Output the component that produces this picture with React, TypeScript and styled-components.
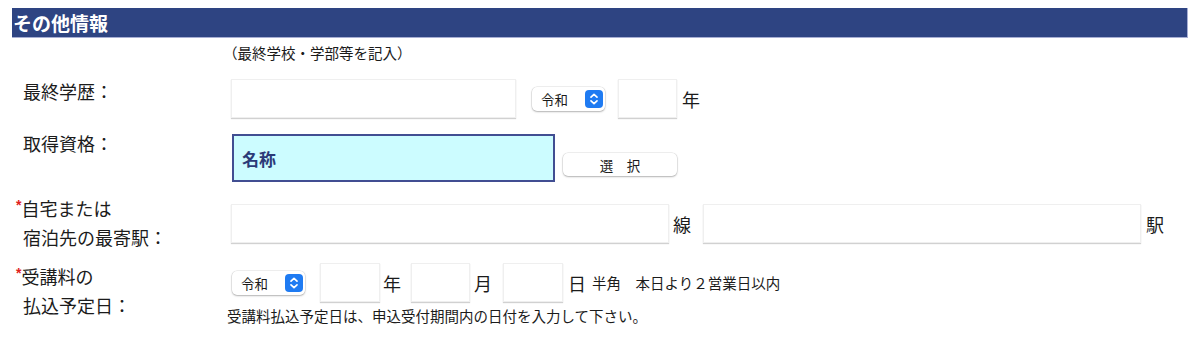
import styled, { createGlobalStyle } from 'styled-components';

const GlobalStyle = createGlobalStyle`
  body {
    margin: 8px;
    background: #ffffff;
    color: #1b1b1b;
    font-family: 'Noto Sans CJK JP', 'Noto Sans', sans-serif;
  }
`;

const Page = styled.div`
  padding: 0 4px;
`;

const SectionHeader = styled.h2`
  margin: 0;
  height: 29px;
  line-height: 29px;
  padding-left: 1px;
  background: #2e4482;
  color: #ffffff;
  font-size: 19px;
  font-weight: 700;
  border-bottom: 1px solid #a7aed3;
  border-right: 1px solid #a7aed3;
`;

const Hint = styled.div`
  margin-top: 5px;
  padding-left: 211px;
  font-size: 14.5px;
  line-height: 20px;
`;

const Row = styled.div<{ $mt: number }>`
  display: flex;
  align-items: flex-start;
  margin-top: ${({ $mt }) => $mt}px;
`;

const Label = styled.div<{ $offset: number }>`
  flex: none;
  width: 208px;
  padding-left: 11px;
  margin-top: ${({ $offset }) => $offset}px;
  font-size: 18px;
  line-height: 29px;
`;

const Required = styled.span`
  margin-left: -7px;
  color: #e0201c;
  font-family: 'Liberation Sans', sans-serif;
  font-size: 14px;
  font-weight: 700;
  vertical-align: top;
  line-height: 22px;
`;

const Field = styled.div`
  display: flex;
  flex-direction: column;
`;

const Controls = styled.div`
  display: flex;
  align-items: center;
`;

const TextInput = styled.input<{ $w: number; $ml?: number }>`
  box-sizing: border-box;
  width: ${({ $w }) => $w}px;
  height: 39px;
  margin: 0 0 0 ${({ $ml }) => $ml ?? 0}px;
  border: 1px solid #efefef;
  box-shadow: 0 1px 1px rgba(0, 0, 0, 0.18);
  background: #ffffff;
  outline: none;
`;

const Unit = styled.span<{ $ml: number }>`
  margin-left: ${({ $ml }) => $ml}px;
  font-size: 18px;
  line-height: 24px;
`;

const SelectBox = styled.div<{ $ml?: number }>`
  box-sizing: border-box;
  display: flex;
  align-items: center;
  justify-content: space-between;
  width: 73px;
  height: 24px;
  margin-left: ${({ $ml }) => $ml ?? 0}px;
  padding: 0 2px 0 9px;
  border-radius: 5px;
  background: #ffffff;
  box-shadow: 0 0 0 0.5px rgba(0, 0, 0, 0.12), 0 1px 2px rgba(0, 0, 0, 0.25);
  font-size: 13.5px;
`;

const Stepper = styled.svg`
  display: block;
`;

const NameBox = styled.div`
  box-sizing: border-box;
  width: 323px;
  height: 48px;
  margin-left: 1px;
  padding-left: 8px;
  display: flex;
  align-items: center;
  background: #ccfcff;
  border: 2px solid #414e92;
  color: #2b3a78;
  font-size: 17px;
  font-weight: 700;
`;

const PickButton = styled.button`
  box-sizing: border-box;
  width: 114px;
  height: 23px;
  margin: 19px 0 0 8px;
  padding: 0;
  border: none;
  border-radius: 5px;
  background: #ffffff;
  box-shadow: 0 0 0 0.5px rgba(0, 0, 0, 0.12), 0 1px 2px rgba(0, 0, 0, 0.25);
  font-family: inherit;
  font-size: 13.5px;
  color: #1b1b1b;
`;

const SmallText = styled.span<{ $ml: number }>`
  margin-left: ${({ $ml }) => $ml}px;
  font-size: 14.5px;
`;

const Note = styled.div`
  margin: 4px 0 0 -4px;
  font-size: 14.5px;
  line-height: 20px;
`;

function EraSelect({ ml }: { ml?: number }) {
  return (
    <SelectBox $ml={ml}>
      <span>令和</span>
      <Stepper width='18' height='18' viewBox='0 0 18 18'>
        <rect width='18' height='18' rx='4' fill='#1f7bf2' />
        <path
          d='M6 7.2 L9 4.4 L12 7.2 M6 10.8 L9 13.6 L12 10.8'
          fill='none'
          stroke='#ffffff'
          strokeWidth='1.7'
          strokeLinecap='round'
          strokeLinejoin='round'
        />
      </Stepper>
    </SelectBox>
  );
}

export default function App() {
  return (
    <Page>
      <GlobalStyle />
      <SectionHeader>その他情報</SectionHeader>

      <Hint>（最終学校・学部等を記入）</Hint>
      <Row $mt={16}>
        <Label $offset={-2}>最終学歴：</Label>
        <Controls>
          <TextInput $w={285} />
          <EraSelect ml={16} />
          <TextInput $w={59} $ml={13} />
          <Unit $ml={5}>年</Unit>
        </Controls>
      </Row>

      <Row $mt={16}>
        <Label $offset={-5}>取得資格：</Label>
        <NameBox>名称</NameBox>
        <PickButton>選　択</PickButton>
      </Row>

      <Row $mt={22}>
        <Label $offset={-10}>
          <Required>*</Required>自宅または
          <br />
          宿泊先の最寄駅：
        </Label>
        <Controls>
          <TextInput $w={438} />
          <Unit $ml={4}>線</Unit>
          <TextInput $w={438} $ml={12} />
          <Unit $ml={5}>駅</Unit>
        </Controls>
      </Row>

      <Row $mt={11}>
        <Label $offset={-1}>
          <Required>*</Required>受講料の
          <br />
          払込予定日：
        </Label>
        <Field>
          <Controls>
            <EraSelect ml={1} />
            <TextInput $w={60} $ml={15} />
            <Unit $ml={3}>年</Unit>
            <TextInput $w={59} $ml={10} />
            <Unit $ml={4}>月</Unit>
            <TextInput $w={60} $ml={11} />
            <Unit $ml={5}>日</Unit>
            <SmallText $ml={6}>半角　本日より２営業日以内</SmallText>
          </Controls>
          <Note>受講料払込予定日は、申込受付期間内の日付を入力して下さい。</Note>
        </Field>
      </Row>
    </Page>
  );
}
